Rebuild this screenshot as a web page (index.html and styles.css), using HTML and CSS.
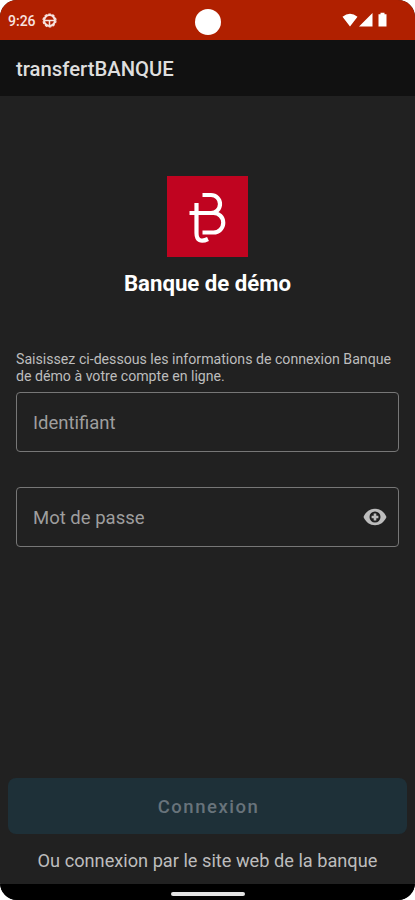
FILE: index.html
```html
<!DOCTYPE html>
<html lang="fr">
<head>
<meta charset="utf-8">
<title>transfertBANQUE</title>
<link rel="stylesheet" href="styles.css">
</head>
<body>
<div class="phone">
  <div class="status">
    <div class="status-left">
      <span class="time">9:26</span>
      <svg class="debug" viewBox="0 0 15 15"><circle cx="7.5" cy="7.5" r="5.400" fill="none" stroke="currentColor" stroke-width="2"/><circle cx="7.5" cy="7.5" r="6.5" fill="none" stroke="currentColor" stroke-width="1.2" stroke-dasharray="2.5 1.6"/><path d="M2.5 7.5h10M7.5 7.5v4.500" fill="none" stroke="currentColor" stroke-width="1.5"/></svg>
    </div>
    <div class="camera"></div>
    <svg class="signals" viewBox="0 0 48 16"><path d="M.5 4.8Q8 -1.2 15.5 4.8L8 14.5ZM30.5 1v13.5H17ZM36.5 2.3h2V.8h4v1.5h2v12.2h-8Z"/></svg>
  </div>
  <header class="appbar"><h1>transfertBANQUE</h1></header>
  <main>
    <section class="brand">
      <svg class="logo" viewBox="0 0 81 81"><rect width="81" height="81" fill="#c00420"/><g fill="none" stroke="#fff" stroke-width="4.2"><path d="M35.500 19H44A9 9 0 0 1 44 37H22.500M44 37H46.500A9.750 9.750 0 0 1 46.500 56.500H35.500"/><path d="M29.500 27V57C29.500 64.500 34 66.500 41 63"/></g></svg>
      <h2>Banque de démo</h2>
    </section>
    <p class="hint">Saisissez ci-dessous les informations de connexion Banque<br>de démo à votre compte en ligne.</p>
    <div class="field"><span class="id">Identifiant</span></div>
    <div class="field"><span class="pw">Mot de passe</span>
      <svg class="eye" viewBox="0 0 24 18"><path fill-rule="evenodd" d="M0.500 9C3 3.500 7 .8 12 .8S21 3.500 23.500 9C21 14.500 17 17.200 12 17.200S3 14.500 .5 9ZM12 3.500a5.500 5.500 0 1 0 0 11a5.500 5.500 0 1 0 0-11Z"/><path d="M10.700 5.600h2.600v2.100h2.100v2.600h-2.100v2.100h-2.600v-2.100H8.600V7.700h2.100Z"/></svg>
    </div>
    <div class="actions">
      <button class="connect">Connexion</button>
      <a class="web">Ou connexion par le site web de la banque</a>
    </div>
  </main>
  <div class="nav"><div class="handle"></div></div>
</div>
</body>
</html>
```
FILE: styles.css
```css
* { box-sizing: border-box; }
body { margin: 0; background: #fff; font-family: Roboto, sans-serif; }
h1, h2, p { margin: 0; }
.phone { width: 415px; height: 900px; display: flex; flex-direction: column; overflow: hidden; border-radius: 17px; background: #212121; white-space: nowrap; }
.status { height: 40px; flex: none; display: grid; grid-template-columns: 1fr 26px 1fr; align-items: center; background: #b02000; color: #f7e4e0; padding: 0 25px 0 8px; }
.status-left { display: flex; align-items: center; gap: 6px; }
.time { font-size: 14px; font-weight: 500; line-height: 20px; padding-top: 1px; }
.debug { width: 15px; height: 15px; }
.camera { width: 26px; height: 26px; border-radius: 50%; background: #fff; margin: 3px 0 0 8.5px; }
.signals { width: 48px; height: 16px; justify-self: end; fill: #fff; }
.appbar { height: 56px; flex: none; display: flex; align-items: center; padding: 2px 0 0 16px; background: #111; }
.appbar h1 { font-size: 20.3px; font-weight: 500; color: #dedede; line-height: 24px; }
main { flex: 1; display: flex; flex-direction: column; padding: 80px 16px 0; }
.brand { display: flex; flex-direction: column; align-items: center; height: 175px; }
.logo { width: 81px; height: 81px; flex: none; }
.brand h2 { margin-top: 12px; font-size: 22.2px; line-height: 28px; font-weight: 700; color: #fff; }
.hint { height: 41px; font-size: 14.15px; line-height: 17px; color: #bdbdbd; }
.field { height: 60px; flex: none; margin-bottom: 35px; border: 1px solid #777; border-radius: 4px; padding: 0 11px 0 16px; display: flex; align-items: center; justify-content: space-between; font-size: 18.5px; color: #9e9e9e; }
.field span { padding-top: 2px; }
.eye { width: 24px; height: 18px; fill: #bdbdbd; }
.actions { margin: auto -8px 0; display: flex; flex-direction: column; align-items: center; height: 106px; }
.connect { width: 100%; height: 56px; border: 0; border-radius: 8px; padding: 2px 0 0 2px; background: #1e3038; color: #68737b; font: 500 18.5px/24px Roboto, sans-serif; letter-spacing: 1.5px; }
.web { margin-top: 15px; font-size: 18.2px; line-height: 24px; color: #bdbdbd; }
.nav { height: 16px; flex: none; background: #000; display: flex; justify-content: center; padding-top: 8px; }
.handle { width: 74px; height: 4px; border-radius: 2px; background: #e4e4e4; }
```
